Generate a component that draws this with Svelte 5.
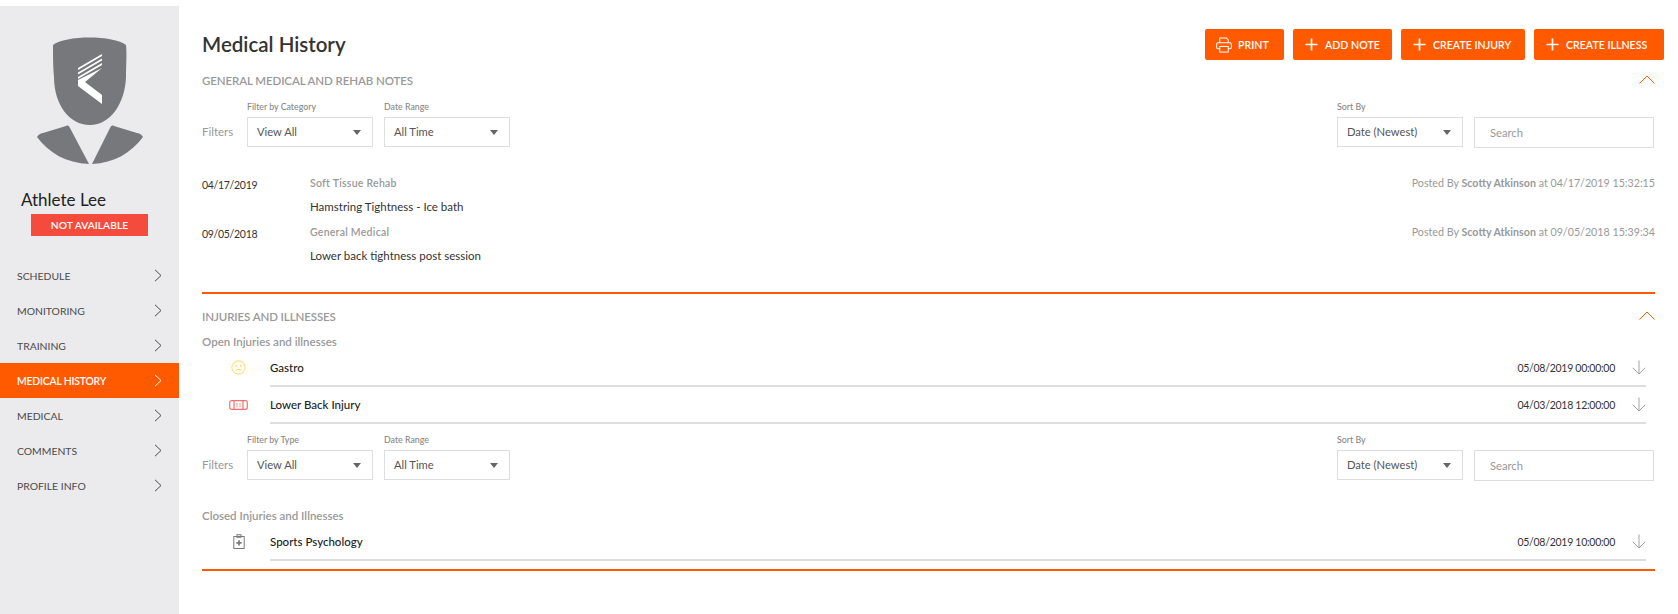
<script lang="ts">
	const nav = ['Schedule', 'Monitoring', 'Training', 'Medical History', 'Medical', 'Comments', 'Profile Info'];
	const notes = [
		{ date: '04/17/2019', category: 'Soft Tissue Rehab', text: 'Hamstring Tightness - Ice bath', posted: '04/17/2019 15:32:15' },
		{ date: '09/05/2018', category: 'General Medical', text: 'Lower back tightness post session', posted: '09/05/2018 15:39:34' }
	];
	const actions = ['Add Note', 'Create Injury', 'Create Illness'];
	const open = [
		{ icon: 'sad', name: 'Gastro', when: '05/08/2019 00:00:00' },
		{ icon: 'band', name: 'Lower Back Injury', when: '04/03/2018 12:00:00' }
	];
	const closed = [{ icon: 'clip', name: 'Sports Psychology', when: '05/08/2019 10:00:00' }];
</script>

{#snippet filters(label: string)}
	<div class="filters">
		<span class="filters-label">Filters</span>
		<div class="field first">
			<span class="field-label">{label}</span>
			<div class="select">View All</div>
		</div>
		<div class="field">
			<span class="field-label">Date Range</span>
			<div class="select">All Time</div>
		</div>
		<div class="field sort">
			<span class="field-label">Sort By</span>
			<div class="select">Date (Newest)</div>
		</div>
		<input class="search" type="text" placeholder="Search" />
	</div>
{/snippet}

{#snippet chevronUp()}
	<svg class="chev-up" width="16" height="9" viewBox="0 0 16 9">
		<path d="M0.5 8.5 L8 1 L15.5 8.5" fill="none" stroke="#ff5a00" stroke-width="1" />
	</svg>
{/snippet}

{#snippet item(row: { icon: string; name: string; when: string })}
	<div class="item">
		<div class="item-icon">
			{#if row.icon === 'sad'}
				<svg width="15" height="15" viewBox="0 0 15 15" fill="none" stroke="#fbdf77" stroke-width="1.1">
					<circle cx="7.5" cy="7.5" r="6.6" />
					<circle cx="5.2" cy="5.8" r="0.4" />
					<circle cx="9.8" cy="5.8" r="0.4" />
					<path d="M4.6 10.6 C5.6 8.9 9.4 8.9 10.4 10.6" />
				</svg>
			{:else if row.icon === 'band'}
				<svg width="19" height="10" viewBox="0 0 19 10" fill="none" stroke="#f4716a" stroke-width="1.2">
					<rect x="0.7" y="0.7" width="17.6" height="8.6" rx="2" />
					<path d="M5 0.7 V9.3 M14 0.7 V9.3" />
					<path d="M8 3.2 V4.4 M11 3.2 V4.4 M8 5.6 V6.8 M11 5.6 V6.8" />
				</svg>
			{:else}
				<svg width="12" height="15" viewBox="0 0 12 15" fill="none" stroke="#7a7a7a" stroke-width="1">
					<rect x="0.8" y="2.5" width="10.4" height="12" />
					<rect x="4" y="0.7" width="4" height="2.6" />
					<path d="M6 6.2 V11.4 M3.4 8.8 H8.6" stroke-width="1.7" />
				</svg>
			{/if}
		</div>
		<div class="item-body">
			<span class="item-name">{row.name}</span>
			<span class="item-when">{row.when}</span>
			<svg class="item-arrow" width="14" height="15" viewBox="0 0 14 15" fill="none" stroke="#a3a3a3" stroke-width="1">
				<path d="M7 0.5 V14 M0.8 7.8 L7 14 L13.2 7.8" />
			</svg>
		</div>
	</div>
{/snippet}

<div class="page">
	<aside class="sidebar">
		<svg class="avatar" width="179" height="170" viewBox="0 0 179 170">
			<path
				fill="#77787b"
				d="M53 39 C65 29 114 29 126 39 C127 48 126 60 126 71 C125 98 110 119 90 119 C69 119 54 98 54 71 C53 60 53 48 53 39 Z"
			/>
			<path fill="#77787b" d="M37 131 C39 128 41 127 43 127 L66 120 C68 119 69 120 70 122 L89 158 C66 157 49 147 37 131 Z" />
			<path fill="#77787b" d="M143 131 C141 128 139 127 137 127 L114 120 C112 119 111 120 110 122 L92 158 C114 157 131 147 143 131 Z" />
			<path fill="#fff" d="M102 48 V50 L78 64 V62 Z M102 52.5 V54.5 L78 68.5 V66.5 Z M102 57 V59 L78 73 V71 Z" />
			<path fill="#fff" d="M102 62 L85 76 L102 89 V98 L78 80 V74 Z" />
		</svg>
		<div class="athlete">Athlete Lee</div>
		<div class="status">NOT AVAILABLE</div>
		<nav>
			{#each nav as link}
				<div class="nav-row" class:active={link === 'Medical History'}>
					<span>{link}</span>
					<svg width="8" height="13" viewBox="0 0 8 13" fill="none" stroke="currentColor" stroke-width="1">
						<path d="M1 0.8 L7 6.5 L1 12.2" />
					</svg>
				</div>
			{/each}
		</nav>
	</aside>

	<main>
		<header>
			<h1>Medical History</h1>
			<div class="actions">
				<button class="print">
					<svg width="16" height="16" viewBox="0 0 17 17" fill="none" stroke="#fff" stroke-width="1.1">
						<path d="M4 6 V1 H11 L13 3 V6" />
						<rect x="0.7" y="6" width="15.6" height="6.5" rx="1.5" />
						<rect x="4" y="10" width="9" height="6" fill="#ff5a00" />
					</svg>
					Print
				</button>
				{#each actions as action}
					<button>
						<svg width="13" height="13" viewBox="0 0 13 13" stroke="#fff" stroke-width="1.7">
							<path d="M6.5 0.5 V12.5 M0.5 6.5 H12.5" />
						</svg>
						{action}
					</button>
				{/each}
			</div>
		</header>

		<section class="notes-section">
			<div class="section-head">
				<h2>General Medical and Rehab Notes</h2>
				{@render chevronUp()}
			</div>
			{@render filters('Filter by Category')}
			<div class="notes">
				{#each notes as note}
					<div class="note">
						<span class="note-date">{note.date}</span>
						<div class="note-main">
							<div class="note-cat">{note.category}</div>
							<div class="note-text">{note.text}</div>
						</div>
						<span class="note-posted">Posted By <b>Scotty Atkinson</b> at {note.posted}</span>
					</div>
				{/each}
			</div>
		</section>

		<section class="injuries">
			<div class="section-head">
				<h2>Injuries and Illnesses</h2>
				{@render chevronUp()}
			</div>
			<h3>Open Injuries and illnesses</h3>
			{#each open as row}
				{@render item(row)}
			{/each}
			{@render filters('Filter by Type')}
			<h3 class="closed">Closed Injuries and Illnesses</h3>
			{#each closed as row}
				{@render item(row)}
			{/each}
		</section>
	</main>
</div>

<style>
	:global(body) {
		margin: 0;
		background: #fff;
	}

	.page {
		display: flex;
		height: 614px;
		overflow: hidden;
		font-family: Lato, sans-serif;
		font-size: 11.5px;
		color: #333;
	}

	/* sidebar */
	.sidebar {
		flex: none;
		width: 179px;
		margin-top: 6px;
		background: #ebebed;
	}

	.avatar {
		display: block;
	}

	.athlete {
		margin: 13px 0 0 21px;
		font-size: 17px;
		line-height: 22px;
		color: #222;
	}

	.status {
		width: 117px;
		height: 22px;
		margin: 3px 0 0 31px;
		background: #f44b3c;
		color: #fff;
		font-size: 10.3px;
		font-weight: 600;
		line-height: 22px;
		text-align: center;
	}

	nav {
		margin-top: 22px;
	}

	.nav-row {
		display: flex;
		align-items: center;
		justify-content: space-between;
		height: 35px;
		padding: 0 17px;
		color: #4a4a4a;
		font-size: 10.4px;
		text-transform: uppercase;
	}

	.nav-row.active {
		background: #ff5a00;
		color: #fff;
		font-weight: 600;
		letter-spacing: -0.2px;
	}

	/* main column */
	main {
		flex: 1;
		padding: 0 23px;
	}

	header {
		display: flex;
		align-items: center;
		justify-content: space-between;
		margin-right: -9px;
		padding-top: 29px;
	}

	h1 {
		margin: -2px 0 0;
		font-size: 20.5px;
		font-weight: 600;
		color: #333;
	}

	.actions {
		display: flex;
		gap: 9px;
	}

	button {
		display: flex;
		align-items: center;
		gap: 7px;
		box-sizing: border-box;
		width: 124px;
		height: 31px;
		padding: 0 0 0 12px;
		border: none;
		border-radius: 2px;
		background: #ff5a00;
		color: #fff;
		font: 600 10.6px Lato, sans-serif;
		text-transform: uppercase;
	}

	button.print {
		width: 79px;
		gap: 6px;
		padding-left: 11px;
	}

	button:nth-child(2) {
		width: 99px;
	}

	button:nth-child(4) {
		width: 130px;
	}

	.section-head {
		display: flex;
		align-items: center;
		justify-content: space-between;
		height: 20px;
	}

	h2 {
		margin: 0;
		font-size: 11.5px;
		font-weight: 600;
		letter-spacing: -0.1px;
		color: #999;
		text-transform: uppercase;
	}

	h3 {
		margin: 8px 0 0;
		font-size: 11.5px;
		line-height: 16px;
		font-weight: 600;
		color: #999;
	}

	.chev-up {
		margin-top: -2px;
	}

	.notes-section {
		margin-top: 10px;
		height: 222px;
		border-bottom: 2px solid #ff5a00;
	}

	/* filter bar */
	.filters {
		display: flex;
		align-items: flex-end;
		margin-top: 11px;
	}

	.injuries .filters {
		margin-top: 10px;
	}

	.filters-label {
		width: 45px;
		line-height: 30px;
		color: #999;
	}

	.field {
		display: flex;
		flex-direction: column;
		margin-right: 11px;
	}

	.field.sort {
		margin-left: auto;
	}

	.field-label {
		margin-bottom: 4px;
		font-size: 8.8px;
		line-height: 12px;
		font-weight: 500;
		color: #888;
	}

	.select {
		position: relative;
		box-sizing: border-box;
		width: 126px;
		height: 30px;
		padding-left: 9px;
		border: 1px solid #dedede;
		font-size: 11.2px;
		line-height: 28px;
		color: #555;
	}

	.select::after {
		content: '';
		position: absolute;
		top: 12px;
		right: 11px;
		border-top: 5px solid #666;
		border-left: 4px solid transparent;
		border-right: 4px solid transparent;
	}

	.search {
		box-sizing: border-box;
		width: 180px;
		height: 31px;
		margin: 0 1px -1px 0;
		padding: 0 15px;
		border: 1px solid #dedede;
		font: 11.2px Lato, sans-serif;
	}

	.search::placeholder {
		color: #999;
	}

	/* notes */
	.notes {
		margin-top: 28px;
	}

	.note {
		display: flex;
		align-items: flex-start;
		height: 49px;
		line-height: 16px;
	}

	.note-date {
		width: 108px;
		padding-top: 2px;
		font-size: 10.5px;
		letter-spacing: -0.3px;
	}

	.note-main {
		flex: 1;
	}

	.note-cat {
		font-size: 10.5px;
		font-weight: 600;
		letter-spacing: 0.25px;
		color: #999;
	}

	.note-text {
		margin-top: 8px;
		color: #333;
	}

	.note-posted {
		font-size: 10.7px;
		color: #999;
	}

	/* injuries */
	.injuries {
		margin-top: 12px;
		padding-bottom: 8px;
		border-bottom: 2px solid #ff5a00;
	}

	.item {
		display: flex;
		height: 37px;
		margin-right: 9px;
	}

	.item-icon {
		display: flex;
		justify-content: center;
		align-items: center;
		width: 63px;
		height: 35px;
		padding-left: 5px;
	}

	.item-body {
		display: flex;
		flex: 1;
		align-items: center;
		border-bottom: 2px solid #dedede;
	}

	.item-name {
		flex: 1;
		font-weight: 500;
		color: #222;
	}

	.item-when {
		margin-right: 17px;
		font-size: 10.5px;
		letter-spacing: -0.27px;
	}

	.closed {
		margin-top: 28px;
	}
</style>
